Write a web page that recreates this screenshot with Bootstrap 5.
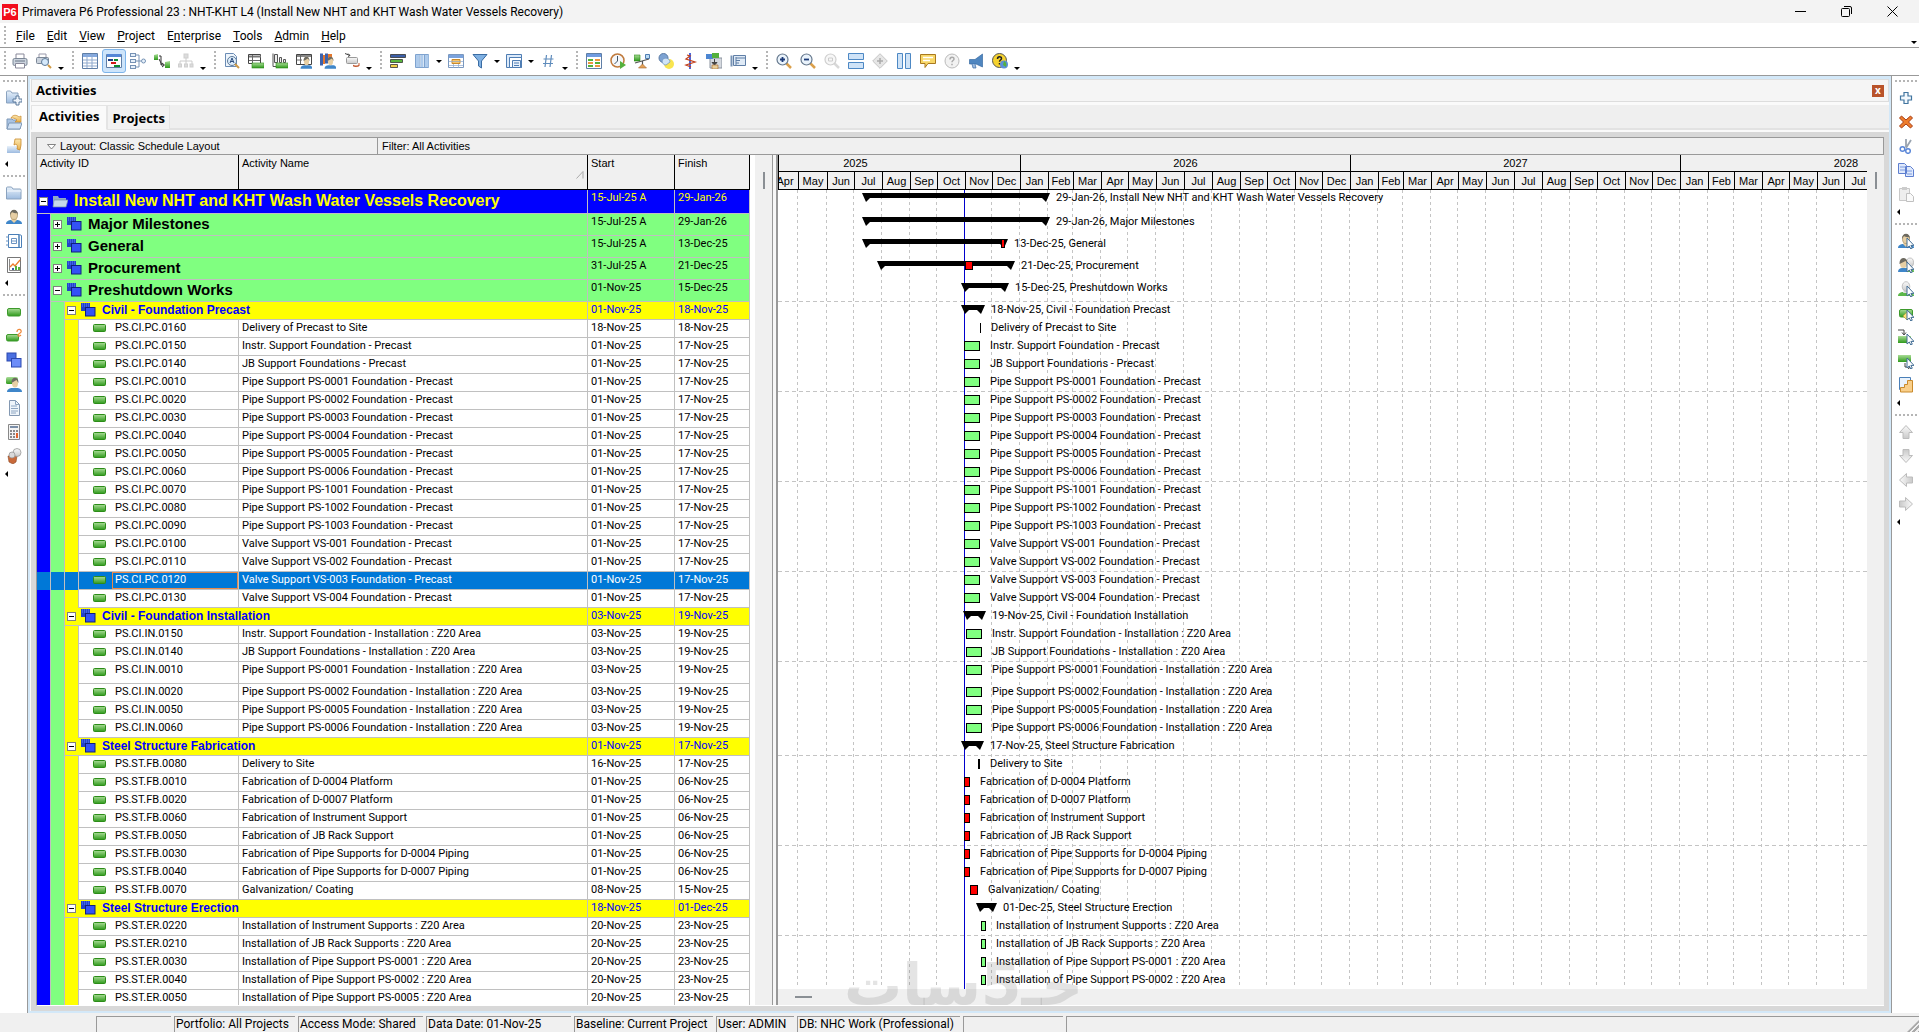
<!DOCTYPE html>
<html lang="en">
<head>
<meta charset="utf-8">
<meta name="viewport" content="width=device-width, initial-scale=1">
<title>Primavera P6 Professional 23</title>
<link href="https://cdn.jsdelivr.net/npm/bootstrap@5.3.0/dist/css/bootstrap.min.css" rel="stylesheet">
<style>
:root{--line:#999;--face:#f0f0f0;--grid:#c0c0c0}
body{font:12px/16px Roboto,"Liberation Sans",sans-serif;color:#000;background:#fff}
button{color:inherit;font:inherit}
.titlebar{height:23px;background:#f3f3f3;padding-left:2px}
.logo-p6{width:16px;height:16px;background:#f20d1c;color:#fff;font:bold 11px/16px "Liberation Sans",sans-serif}
.win-btn{width:46px;height:23px}
.menubar{height:25px;border-bottom:1px solid var(--line)}
.menubar .nav-link{color:#000;padding:2px 6px 0;line-height:20px}
.grip{width:2px;background:repeating-linear-gradient(#b5b5b5 0 2px,transparent 2px 4px)}
.toolbar{height:28px;border-bottom:1px solid var(--line)}
.toolbar .grip{height:20px;margin:0 4px 0 6px}
.toolbar .grip:first-child{margin:0 2px 0 4px}
.tool{width:24px;height:24px;border:1px solid transparent;border-radius:3px;background:none;padding:0;display:flex;align-items:center;justify-content:center}
.tool.on{background:#cde4fa;border-color:#7db4ea}
.ico{width:16px;height:16px;display:block;flex:none}
.pill{width:14px;height:10px;display:block;flex:none}
.caret{width:10px;height:24px;border:0;background:none;padding:0;display:flex;align-items:center;justify-content:center}
.caret::before{content:"";border:3px solid transparent;border-top:3px solid #000;border-bottom:0}
.caret.low::before{margin-top:14px}
.sidebar{width:28px;flex:none;border-right:1px solid var(--line)}
.sidebar.right{border-right:0;border-left:1px solid var(--line)}
.dots{width:22px;height:2px;margin:4px 0;background:repeating-linear-gradient(90deg,#b5b5b5 0 2px,transparent 2px 4px)}
.sidebar .more{width:24px;height:13px;border:0;background:none;padding:0 0 0 3px;display:flex;align-items:center}
.more::before{content:"";border:3px solid transparent;border-right:3px solid #000;border-left:0}
.frame{border:2px solid #d3e8f8;border-top-width:3px;background:#fafafa;padding-left:1px}
.doc-head{height:23px;border:1px solid #ddd;background:#f5f5f5;font:bold 13px/21px "Open Sans",sans-serif;padding:1px 4px 0}
.closebox{width:12px;height:12px;background:#b9532a;color:#fff;border:0;padding:0;font:bold 10px/11px "Open Sans",sans-serif}
.doc-tabs{height:25px;background:#efefef;border-bottom:2px solid #e2e2e2;margin:3px 0 2px}
.doc-tabs .nav-link{font:bold 13px/22px "Open Sans",sans-serif;color:#000;padding:1px 4px 0;border:1px solid #e4e4e4;border-radius:0;background:#f2f2f2}
.doc-tabs .nav-link.active{background:#fafafa;border-bottom-color:#fafafa;padding:0 7px 1px;line-height:21px}
.workspace{background:#d8d8d8;padding:5px}
.layoutbar{height:18px;border:1px solid var(--line);background:var(--face);font:11px/16px "Liberation Sans",sans-serif}
.layoutbar .lay{width:341px;border-right:1px solid var(--line)}
.layoutbar button{border:0;background:none;padding:0 0 0 10px}
.panes{border-left:1px solid var(--line);background:var(--face);border-bottom:1px solid #fff}
.pane-left{width:718px;background:#fff}
.strip{width:17px;background:var(--face)}
.thumb-v{width:2px;height:17px;background:#8a8f94;margin:17px 0 0 8px}
.splitter{width:6px;border-left:1px solid var(--line);border-right:2px solid var(--line);background:#f7f7f7}
.gantt-table{table-layout:fixed;width:713px;border-collapse:separate;border-spacing:0;font:11px/16px Roboto,"Liberation Sans",sans-serif}
.gantt-table th{font:11px/16px "Liberation Sans",sans-serif;height:35px;background:var(--face);border-right:1px solid #000;border-bottom:1px solid #000;vertical-align:top;padding:0 3px}
.gantt-table td{padding:0 3px;vertical-align:top;border-right:1px solid var(--grid);border-bottom:1px solid var(--grid);white-space:nowrap}
.gantt-table td.tree{padding:0;border-bottom:0}
.h24{height:24px}.h22{height:22px}.h18{height:18px}
.band{width:14px;flex:none;border-right:1px solid var(--grid)}
.band-blue{background:#00f}.band-green{background:#80ff80}.band-yellow{background:#ff0}
.node{border-bottom:1px solid var(--grid);display:flex;align-items:center;flex:1 1 0}
.lv0 td,.lv0 .node{background:#00f;color:#ff0}
.lv1 td,.lv1 .node{background:#80ff80}
.lv2 td,.lv2 .node{background:#ff0;color:#00f}
.lv0 .nm{font:bold 16px/20px "Liberation Sans",sans-serif;padding-left:6px}
.lv1 .nm{font:bold 15px/20px "Liberation Sans",sans-serif;padding-left:6px}
.lv2 .nm{font:bold 12px/16px "Liberation Sans",sans-serif;padding-left:6px}
.pm{width:9px;height:9px;border:1px solid #808080;background:#fff;padding:0;margin:0 4px 0 2px;flex:none;position:relative}
.pm::before{content:"";position:absolute;left:1px;right:1px;top:3px;height:1px;background:#000}
.pm.plus::after{content:"";position:absolute;top:1px;bottom:1px;left:3px;width:1px;background:#000}
.act .node{padding-left:14px}
.act .aid{padding-left:3px;margin-left:5px;flex:1;height:100%}
.sel td,.sel .node,.sel .band{background:#0078d7;color:#fff}
.sel .aid{outline:1px solid #e8894a;outline-offset:-1px}
.chart{background:#fff}
.scale{height:35px;background:var(--face);font:11px/16px "Liberation Sans",sans-serif;border-left:1px solid #000}
.scale .yr,.scale .mo{flex:none;text-align:center;border-right:1px solid #000;border-bottom:1px solid #000}
.scale .yr{height:17px}.scale .mo{height:18px;line-height:18px}
.months-grid{position:absolute;inset:0 0 4px 0;overflow:hidden}
.months-grid div{flex:none;background:repeating-linear-gradient(#c4c4c4 0 3px,transparent 3px 6px) right/1px 100% no-repeat}
.dataline{position:absolute;top:0;bottom:0;width:1px;background:#00c}
.crow{display:flex;align-items:flex-start;font:11px/15px Roboto,"Liberation Sans",sans-serif;white-space:nowrap;position:relative}
.crow.rule{background:repeating-linear-gradient(90deg,#c4c4c4 0 4px,transparent 4px 7px) bottom/100% 1px no-repeat}
.bar{flex:none;height:10px;margin-top:3px;border:1px solid #000;background:#80ff80}
.bar.crit{background:#f00}
.bar.tick{background:#000;border:0}
.summ{flex:none;height:9px;margin-top:3px;background:#000;clip-path:polygon(0 0,100% 0,calc(100% - 4px) 100%,calc(100% - 8px) 5px,8px 5px,4px 100%)}
.over{position:absolute;top:3px;height:9px;border:1px solid #000;background:#f00}
.lbl{padding-left:10px}.summ ~ .lbl{padding-left:6px}
.bottom-strip{height:16px;background:var(--face)}
.thumb-h{width:17px;height:2px;background:#8a8f94;margin:7px 0 0 17px}
.mark-logo{position:absolute;left:66px;bottom:-4px;color:rgba(120,120,120,.2);font:bold 58px/48px "DejaVu Sans",sans-serif;pointer-events:none;white-space:nowrap}
.status{height:19px;border-top:3px solid var(--face);background:var(--face)}
.status .cellbox{border-top:1px solid var(--line);border-left:1px solid var(--line);padding-left:1px;line-height:15px;margin-right:3px;white-space:nowrap;overflow:hidden;flex:none}
.resizer{width:12px;height:12px;background:repeating-linear-gradient(135deg,#aaa 0 2px,var(--face) 2px 4px);clip-path:polygon(100% 0,100% 100%,0 100%)}
</style>
</head>
<body class="vh-100 d-flex flex-column overflow-hidden">
<svg width="0" height="0" class="position-absolute" aria-hidden="true">
<defs>
<linearGradient id="gb" x1="0" y1="0" x2="0" y2="1"><stop offset="0" stop-color="#e8f1fa"/><stop offset="1" stop-color="#9dbbe0"/></linearGradient>
<linearGradient id="gg" x1="0" y1="0" x2="0" y2="1"><stop offset="0" stop-color="#a9dc97"/><stop offset="1" stop-color="#2f9a1c"/></linearGradient>
<linearGradient id="gy" x1="0" y1="0" x2="0" y2="1"><stop offset="0" stop-color="#fbe7b0"/><stop offset="1" stop-color="#e9b04a"/></linearGradient>
<linearGradient id="gs" x1="0" y1="0" x2="0" y2="1"><stop offset="0" stop-color="#fafafa"/><stop offset="1" stop-color="#c9c9c9"/></linearGradient>
</defs>
<symbol id="i-person" viewBox="0 0 16 16"><path d="M0 15c0-3 3-4 5-4h6c2 0 5 1 5 4z" fill="#3f86c9"/><path d="M6 9h4l1 2-3 3-3-3z" fill="#e7cfa4"/><ellipse cx="8" cy="6" rx="3.500" ry="4.500" fill="#e7cfa4" stroke="#9a8458" stroke-width=".6"/><path d="M4 6c-.5-7 8.500-7 8 0l-1-2c-2 .5-4 0-5-1z" fill="#6d6a60"/></symbol>
<symbol id="i-pair" viewBox="0 0 16 16"><path d="M5 15c0-3 2-4 4-4h3c2 0 4 1 4 4z" fill="#5cb84a"/><ellipse cx="12" cy="5.500" rx="3.500" ry="4.500" fill="url(#gs)" stroke="#aaa" stroke-width=".7"/><path d="M0 15c0-3 2-4 4-4h3c2 0 3 1 3 4z" fill="#3f86c9"/><ellipse cx="5.500" cy="6.500" rx="3.500" ry="4.500" fill="#e7cfa4"/><path d="M1.500 7c-.5-8 8.500-8 8 0l-2-3z" fill="#6d6a60"/></symbol>
<symbol id="i-ghost" viewBox="0 0 16 16"><path d="M0 15c0-3 3-4 5-4h6c2 0 5 1 5 4z" fill="#5cb84a"/><path d="M6 9h4l1 3H5z" fill="#ddd"/><ellipse cx="8" cy="5.500" rx="3.800" ry="4.800" fill="url(#gs)" stroke="#aaa" stroke-width=".7"/></symbol>
<symbol id="i-cur" viewBox="0 0 16 16"><path d="M9 5v10l2.300-2 1.500 3 1.500-.8-1.400-2.800H16z" fill="#fff" stroke="#456f96"/></symbol>
<symbol id="i-diam" viewBox="0 0 16 16"><path d="M9 7l4 4-4 4-4-4z" fill="#f8e27a" stroke="#b99a2c" stroke-width=".7"/></symbol>
<symbol id="i-pred" viewBox="0 0 16 16"><path d="M0 1h6v4M4 3.500L6 6l2-2.500" fill="none" stroke="#444"/><rect x="0" y="7" width="13" height="7" fill="url(#gg)"/></symbol>
<symbol id="i-succ" viewBox="0 0 16 16"><rect x="0" y="2" width="13" height="7" fill="url(#gg)"/><path d="M7 10v4h5M10 12l2.500 2-2.500 2" fill="none" stroke="#444"/></symbol>
<symbol id="i-act" viewBox="0 0 16 16"><rect x="1.500" y="4.500" width="13" height="7.500" rx="1.500" fill="url(#gg)" stroke="#3d9a2c"/></symbol>
<symbol id="i-pill" viewBox="0 0 14 10"><rect x=".5" y="1.500" width="12" height="7" rx="1" fill="url(#gg)" stroke="#2c8c18"/></symbol>
<symbol id="i-wbs" viewBox="0 0 16 16"><rect x="1" y="1" width="9" height="8" fill="#2442c8"/><path d="M2 2h7M2 4h7" stroke="#5f86ff" stroke-dasharray="1 1"/><rect x="5.500" y="5.500" width="9.500" height="8.500" fill="#3352f5" stroke="#10207c"/></symbol>
<symbol id="i-wbs2" viewBox="0 0 16 16"><rect x="1" y="1" width="9" height="8" fill="#4a6fe0" stroke="#2b49b0"/><rect x="5.500" y="6.500" width="9.500" height="8.500" fill="#6d8df8" stroke="#2b49b0"/></symbol>
<symbol id="i-folder" viewBox="0 0 16 16"><path d="M.5 14V3c0-.6.400-1 1-1h4l1.500 2H14c.8 0 1 .4 1 1v9z" fill="url(#gb)" stroke="#8ba3bf"/><path d="M1 6h14" stroke="#f5f9fd"/></symbol>
<symbol id="i-folderopen" viewBox="0 0 16 16"><path d="M1 14V3h5l1 2h7v9z" fill="#8fa9c8"/><path d="M1 14l1-7h14l-2 7z" fill="#c6d8ea" stroke="#6b89ab" stroke-width=".7"/></symbol>
<symbol id="i-newprj" viewBox="0 0 16 16"><path d="M.5 13V2c0-.6.400-1 1-1h3l1.500 2H12v10z" fill="url(#gb)" stroke="#8ba3bf"/><path d="M10 6h3v3h3v3h-3v3h-3v-3H7V9h3z" fill="#eef4fb" stroke="#5d7a9c"/></symbol>
<symbol id="i-openprj" viewBox="0 0 16 16"><path d="M1 15V5h5l1 1h7v9z" fill="#a9c3e3" stroke="#7f99b8"/><path d="M1 15l2-6h13l-2 6z" fill="#cfe0f3" stroke="#7f99b8"/><path d="M5 4c2-4 6-3 8-1l2-1v6H9l2-2c-2-2-4-2-6-2z" fill="url(#gy)" stroke="#c98a2c" stroke-width=".7"/></symbol>
<symbol id="i-closeprj" viewBox="0 0 16 16"><path d="M1 15V8h10l3 1v6z" fill="url(#gb)"/><path d="M9 1h6v6l-1 5-3-1c1-3 0-4-1-5l-2 1z" fill="url(#gy)" stroke="#c98a2c" stroke-width=".8"/></symbol>
<symbol id="i-print" viewBox="0 0 16 16"><path d="M4 1h8v5H4z" fill="#fff" stroke="#889"/><rect x="1" y="5.500" width="14" height="7" rx="1.500" fill="#cbd3dd" stroke="#7b8796"/><path d="M3.500 10.500h9v4.500h-9z" fill="#fff" stroke="#889"/><path d="M3 8h10" stroke="#6a7787"/></symbol>
<symbol id="i-preview" viewBox="0 0 16 16"><path d="M3 1h7v4H3z" fill="#fff" stroke="#99a"/><rect x=".5" y="4.500" width="12" height="6" rx="1" fill="#cbd3dd" stroke="#7b8796"/><circle cx="9" cy="9" r="3.500" fill="#d5e9fb" stroke="#5e7a98"/><path d="M12 12l3 3" stroke="#d09a45" stroke-width="2"/></symbol>
<symbol id="i-table" viewBox="0 0 16 16"><path d="M.5.500h15v15H.5z" fill="#fff" stroke="#5f7ea6"/><path d="M1 1h14v3H1z" fill="#84a9e0"/><path d="M1 7h14M1 10h14M1 13h14M5 1v14M10 1v14" stroke="#8fa9cd"/></symbol>
<symbol id="i-gantt" viewBox="0 0 16 16"><path d="M.5 1.500h15v13H.5z" fill="#fff" stroke="#5f7ea6"/><path d="M1 1h14v3H1z" fill="#5487d6"/><path d="M2 6h5v2H2z" fill="#1d3f86"/><path d="M5 9h5v2H5z" fill="#d11a1a"/><path d="M8 6h4v2H8zM8 12h6v2H8z" fill="#0d8b35"/></symbol>
<symbol id="i-net" viewBox="0 0 16 16"><g fill="#e6f0fa" stroke="#7692b5"><rect x=".5" y=".5" width="5" height="3"/><rect x=".5" y="6.500" width="5" height="3"/><rect x=".5" y="12.500" width="5" height="3"/><circle cx="13.500" cy="8" r="2"/></g><path d="M6 2h3v12H6M6 8h5" fill="none" stroke="#7692b5"/></symbol>
<symbol id="i-trace" viewBox="0 0 16 16"><path d="M0 2l4-1v6H0z" fill="url(#gg)"/><path d="M11 9l5-1v7h-5z" fill="url(#gg)"/><path d="M5 3h2v9h3M5 6l3 6M8 10l2.500 2L8 14" fill="none" stroke="#333"/></symbol>
<symbol id="i-org" viewBox="0 0 16 16"><g fill="#dcdcdc" stroke="#cfcfcf"><rect x="6" y="1" width="4" height="4"/><rect x=".5" y="11" width="3" height="3"/><rect x="6.500" y="11" width="3" height="3"/><rect x="12" y="11" width="3" height="3"/></g><path d="M8 5v6M2 11V8h12v3" fill="none" stroke="#ccc"/></symbol>
<symbol id="i-find" viewBox="0 0 16 16"><path d="M1.500.500h8l3 3v10h-11z" fill="#eef5fc" stroke="#6b8cb5"/><circle cx="8" cy="8" r="4.500" fill="#dcecfb" stroke="#5e7a98"/><path d="M6 10l2-5 2 5M6.700 8.500h2.600" fill="none" stroke="#2b4c7c"/><path d="M11 11l4 4" stroke="#d09a45" stroke-width="2"/></symbol>
<symbol id="i-grid2" viewBox="0 0 16 16"><path d="M.5 1.500h12v9H.5z" fill="#fff" stroke="#444"/><path d="M1 3.500h12" stroke="#777" stroke-width="2"/><path d="M4.500 2v9M1 7.500h11" stroke="#666"/><rect x="4" y="10" width="12" height="5" fill="url(#gg)" stroke="#2c8c18" stroke-width=".6"/></symbol>
<symbol id="i-prof" viewBox="0 0 16 16"><path d="M1 .5v13h14" stroke="#555" fill="none"/><path d="M2.500 1.500h3v8h-3zM7.500 4.500h2v5h-2zM11.500 6.500h2v3h-2z" fill="#eee" stroke="#555"/><rect x="4" y="10" width="12" height="5" fill="url(#gg)" stroke="#2c8c18" stroke-width=".6"/></symbol>
<symbol id="i-rgrid" viewBox="0 0 16 16"><path d="M.5 1.500h15v10H.5z" fill="#fff" stroke="#444"/><path d="M1 3h14" stroke="#888" stroke-width="2"/><path d="M4.500 1v10M1 7h5" stroke="#666"/><g transform="translate(4.500 3) scale(.75 .85)"><path d="M0 15c0-3 3-4 5-4h6c2 0 5 1 5 4z" fill="#3f86c9"/><ellipse cx="8" cy="6" rx="3.500" ry="5" fill="#e7cfa4"/><path d="M4 6c-.5-7 8.500-7 8 0l-2-3z" fill="#6d6a60"/></g></symbol>
<symbol id="i-rprof" viewBox="0 0 16 16"><path d="M0 .5h3v12H0zM5 .5h3v10H5z" fill="#3c62ad"/><path d="M3 2h2v9H3zM8 1h4v9H8z" fill="#e3762c"/><g transform="translate(4.500 3) scale(.75 .85)"><path d="M0 15c0-3 3-4 5-4h6c2 0 5 1 5 4z" fill="#3f86c9"/><ellipse cx="8" cy="6" rx="3.500" ry="5" fill="#e7cfa4"/><path d="M4 6c-.5-7 8.500-7 8 0l-2-3z" fill="#6d6a60"/></g></symbol>
<symbol id="i-rel" viewBox="0 0 16 16"><path d="M1 .5l5 2M4 .5l2 2-2 1" stroke="#444" fill="none"/><rect x="2.500" y="4.500" width="11" height="6" rx="1" fill="url(#gs)" stroke="#999"/><path d="M9 12c3 3 5 1 6 0M9 13h6v-3" stroke="#c0552a" fill="none"/></symbol>
<symbol id="i-bars" viewBox="0 0 16 16"><g stroke="#333" stroke-width=".8"><path d="M.5 1.500h15v3H.5z" fill="#3c5fa8"/><path d="M.5 6.500h12v3H.5z" fill="#59b63c"/><path d="M.5 11.500h7v3h-7z" fill="#f2cf48"/></g></symbol>
<symbol id="i-cols" viewBox="0 0 16 16"><path d="M1.500 1.500h13v13h-13z" fill="#fff" stroke="#7fa3cf"/><path d="M2 2h3.500v12H2zM7 2h2.500v12H7zM11 2h3.500v12H11z" fill="#aecbec"/><path d="M6 1v14M10.500 1v14" stroke="#7fa3cf"/></symbol>
<symbol id="i-tscale" viewBox="0 0 16 16"><path d="M.5 1.500h15v13H.5z" fill="#fff" stroke="#7a98bf"/><path d="M1 2h14v3H1z" fill="#7ba3dd"/><path d="M4 6.500h8v4H4z" fill="#f8c56a" stroke="#c98a2c"/><path d="M1 12.500h14M5.500 11v4M10.500 11v4M1 8.500h14" stroke="#8fa9cd" stroke-width=".7"/></symbol>
<symbol id="i-filter" viewBox="0 0 16 16"><path d="M1 1.500h14L9.500 8v7l-3-2V8z" fill="#7fb0e2" stroke="#3a6ca3"/></symbol>
<symbol id="i-group" viewBox="0 0 16 16"><path d="M.5 1.500h15v13H.5z" fill="#dceafa" stroke="#4f7db3"/><path d="M3.500 4.500h12v10h-12z" fill="#fff" stroke="#4f7db3"/><path d="M6.500 7.500h8v7h-8z" fill="#e9f2fc" stroke="#4f7db3"/><path d="M8 10h5M8 12.500h5" stroke="#4f7db3"/></symbol>
<symbol id="i-hash" viewBox="0 0 16 16"><path d="M6.500 2L5 14M11.500 2L10 14M3.500 6h10M3 10.500h10" stroke="#5f8cbc" stroke-width="1.200"/></symbol>
<symbol id="i-sheet" viewBox="0 0 16 16"><path d="M.5.500h15v15H.5z" fill="#fff" stroke="#5f7ea6"/><path d="M1 1h14v3H1z" fill="#6f9be0"/><path d="M2 6h5v2H2zM2 12h5v2H2zM9 9h5v2H9z" fill="#54b13d"/><path d="M2 9h5v2H2zM9 6h5v2H9zM9 12h5v2H9z" fill="#ee9440"/></symbol>
<symbol id="i-clock" viewBox="0 0 16 16"><circle cx="7.500" cy="7.500" r="6.500" fill="#f4f7fb" stroke="#c07a3c" stroke-width="1.500"/><path d="M7.500 3v5l-3 3" fill="none" stroke="#456"/><path d="M10 8l6 4-6 4z" fill="#54b13d"/></symbol>
<symbol id="i-level" viewBox="0 0 16 16"><path d="M0 2h6v6H0z" fill="url(#gg)" stroke="#2c8c18" stroke-width=".6"/><path d="M11.500 1.500h4v4h-4z" fill="#bcdcf5" stroke="#4f7db3"/><path d="M1 10l14-4M8.500 8v5" stroke="#555" stroke-width="1.200"/><path d="M4.500 15l4-4 4 4z" fill="#e3a25a" stroke="#a4662a" stroke-width=".6"/></symbol>
<symbol id="i-prog" viewBox="0 0 16 16"><circle cx="5.500" cy="5" r="4.500" fill="#7da3d3" stroke="#5b7ba5"/><circle cx="11" cy="11" r="5" fill="#f9e54f"/><path d="M5 6c3-2 7 0 7 3l-4 3c-3 0-5-3-3-6z" fill="#cfe3f7" stroke="#6d91bd" stroke-width=".7"/></symbol>
<symbol id="i-line" viewBox="0 0 16 16"><path d="M8 0v16" stroke="#1f3fd0" stroke-width="1.600"/><path d="M5 2l3 1-4 3 9 3-9 3 5 2" fill="none" stroke="#c2401c" stroke-width="1.300"/></symbol>
<symbol id="i-store" viewBox="0 0 16 16"><path d="M4 5h12v10H4z" fill="#d5d9df" stroke="#8a929e"/><path d="M0 1h7v5H0z" fill="#4c86d2"/><path d="M6 0h7v5H6z" fill="#54b13d"/><path d="M8.500 6v4M6 9.500L8.500 12 11 9.500z" stroke="#444" fill="#444"/><path d="M6 12h6v4H6z" fill="#e9cf9b" stroke="#a4662a" stroke-width=".6"/></symbol>
<symbol id="i-spot" viewBox="0 0 16 16"><path d="M.5 2.500h2v11h-2z" fill="#7793b5"/><path d="M3.500 2.500h12v10h-12z" fill="#dfeaf6" stroke="#5f7ea6"/><path d="M6 5h9M6 7.500h4M6 10h3M6 4v8" stroke="#5f7ea6"/></symbol>
<symbol id="i-zin" viewBox="0 0 16 16"><path d="M10 10l5 5" stroke="#dba04b" stroke-width="2.500"/><circle cx="6.500" cy="6.500" r="5.500" fill="#eaf3fb" stroke="#65788d" stroke-width="1.200"/><path d="M6.500 4v5M4 6.500h5" stroke="#1c3a78" stroke-width="1.800"/></symbol>
<symbol id="i-zout" viewBox="0 0 16 16"><path d="M10 10l5 5" stroke="#dba04b" stroke-width="2.500"/><circle cx="6.500" cy="6.500" r="5.500" fill="#eaf3fb" stroke="#65788d" stroke-width="1.200"/><path d="M4 6.500h5" stroke="#1c3a78" stroke-width="1.800"/></symbol>
<symbol id="i-zfit" viewBox="0 0 16 16"><path d="M10 10l5 5" stroke="#d8d8d8" stroke-width="2.500"/><circle cx="6.500" cy="6.500" r="5.500" fill="#f7f7f7" stroke="#cfcfcf" stroke-width="1.200"/><path d="M4.500 5h4v3h-4z" fill="none" stroke="#ccc"/></symbol>
<symbol id="i-hsplit" viewBox="0 0 16 16"><path d="M.5.500h15v6H.5zM.5 9.500h15v6H.5z" fill="#cfe3f7" stroke="#4d88c4"/></symbol>
<symbol id="i-diamond" viewBox="0 0 16 16"><path d="M8 .7L15.300 8 8 15.300.7 8z" fill="#e6e6e6" stroke="#c4c4c4"/><path d="M8 5v6M5 8h6" stroke="#aaa" stroke-width="1.500"/></symbol>
<symbol id="i-vsplit" viewBox="0 0 16 16"><path d="M1.500.500h5v15h-5zM9.500.500h5v15h-5z" fill="#cfe3f7" stroke="#4d88c4"/></symbol>
<symbol id="i-note" viewBox="0 0 16 16"><path d="M.5 1.500h15v9H8l-3 4v-4H.5z" fill="#f8d768" stroke="#a9791f"/><path d="M3 4.500h10M3 7.500h7" stroke="#fff" stroke-width="1.500"/></symbol>
<symbol id="i-helpg" viewBox="0 0 16 16"><circle cx="8" cy="8" r="7" fill="#f2f2f2" stroke="#bbb"/><path d="M6 6.500c0-3 4-3 4-.5 0 1.500-2 1.500-2 3.200M8 10.800v1.400" fill="none" stroke="#aaa" stroke-width="1.500"/></symbol>
<symbol id="i-horn" viewBox="0 0 16 16"><path d="M14.500 1v13L8 11H1.500V6.500H7z" fill="#4f86c0" stroke="#3a6ca3" stroke-width=".7"/><path d="M4 11l1 4h3l-1-4" fill="#9dbbe0" stroke="#3a6ca3" stroke-width=".7"/></symbol>
<symbol id="i-helpc" viewBox="0 0 16 16"><circle cx="7.500" cy="7.500" r="7" fill="#f6d22e" stroke="#555"/><path d="M5.500 6c0-3 4-3 4-.5 0 1.500-2 1.500-2 3.200M7.500 10v1.500" fill="none" stroke="#222" stroke-width="1.500"/><circle cx="12" cy="11.500" r="4" fill="#5a8fd8"/><path d="M12 8c2 1 3 3 2 6l-3-2z" fill="#54b13d"/></symbol>
<symbol id="i-book" viewBox="0 0 16 16"><path d="M2.500 1.500h11l2 1v12h-13z" fill="#fff" stroke="#4a7fb8"/><path d="M13 2v12" stroke="#4a7fb8" stroke-width="1.500"/><path d="M5.500 5.500h5v5h-5zM6 8h4M0 4h3M0 8h3M0 12h3" fill="none" stroke="#6b93c2"/></symbol>
<symbol id="i-track" viewBox="0 0 16 16"><path d="M1.500.500h13v15h-13z" fill="#fff" stroke="#777"/><path d="M3.500 2v11.500H14" fill="none" stroke="#888"/><path d="M4 10l3-3 2 2 5-6" fill="none" stroke="#ec7d2b" stroke-width="1.300"/><path d="M6 11h2v2H6z" fill="#3c5fa8"/><path d="M9 9h2v4H9zM12 10h2v3h-2z" fill="#54b13d"/></symbol>
<symbol id="i-steps" viewBox="0 0 16 16"><rect x=".5" y="6.500" width="12" height="6.500" rx="1.500" fill="url(#gg)" stroke="#3d9a2c"/><path d="M11 4c0-4 5-3 4 0-.6 1.500-2 1-3 3 0 2 2 1 3 0" fill="none" stroke="#ee8a3c" stroke-width="1.300"/></symbol>
<symbol id="i-assign" viewBox="0 0 16 16"><rect x="0" y="1" width="12" height="7" rx="1.500" fill="url(#gg)"/><path d="M1 16c0-3 3-4 5-4h5c2 0 5 1 5 4z" fill="#3f86c9"/><ellipse cx="9" cy="7" rx="3" ry="4.500" fill="#e7cfa4"/><path d="M5.500 7c-.5-7 7.500-7 7 0l-2-3z" fill="#6d6a60"/></symbol>
<symbol id="i-doc" viewBox="0 0 16 16"><path d="M3.500.500h6l4 4v11h-10z" fill="#eff5fb" stroke="#8398b2"/><path d="M9.500.500v4h4M5 6h6M5 8.500h7M5 11h7M5 13h5" fill="none" stroke="#8ea6c2"/></symbol>
<symbol id="i-calc" viewBox="0 0 16 16"><path d="M2.500.500h11v15h-11z" fill="#f4f4f4" stroke="#888"/><path d="M4 3h8" stroke="#7a8ea8" stroke-width="2"/><path d="M4 7h8M4 10h5M4 13h5" stroke="#666" stroke-width="1.500" stroke-dasharray="2 1"/><path d="M10 9h2v5h-2z" fill="#e2622c"/></symbol>
<symbol id="i-risk" viewBox="0 0 16 16"><path d="M2 8h9l-1 6-3 2-4-2z" fill="#c96a3a" stroke="#8a4420" stroke-width=".6"/><circle cx="11" cy="4.500" r="4" fill="url(#gs)" stroke="#999" stroke-width=".8"/><circle cx="6" cy="7" r="3" fill="#d9d9d9" stroke="#999" stroke-width=".8"/></symbol>
<symbol id="i-plus" viewBox="0 0 16 16"><path d="M6 2.500h4V6h3.500v4H10v3.500H6V10H2.500V6H6z" fill="#f2f8fd" stroke="#41759f" stroke-width="1.200"/></symbol>
<symbol id="i-del" viewBox="0 0 16 16"><path d="M3.500 2L8 6l4.500-4 2 2-4 4 4 4-2 2L8 10l-4.500 4-2-2 4-4-4-4z" fill="#ee7d2c" stroke="#a63c14"/></symbol>
<symbol id="i-cut" viewBox="0 0 16 16"><path d="M8 1v8M13 2L8 10" stroke="#9aa4b0" stroke-width="1.800"/><circle cx="4.500" cy="11" r="2.300" fill="none" stroke="#5b87d8" stroke-width="1.500"/><circle cx="10" cy="13" r="2.300" fill="none" stroke="#5b87d8" stroke-width="1.500"/></symbol>
<symbol id="i-copy" viewBox="0 0 16 16"><path d="M.5 1.500h6l2 2v8h-8zM7.500 4.500h5l3 3v7h-8z" fill="#dfe9fb" stroke="#5e7fd0"/><path d="M2 5h5M2 8h5M9 9h5M9 12h5" stroke="#7c9be0"/></symbol>
<symbol id="i-paste" viewBox="0 0 16 16"><path d="M1.500 2.500h10v12h-10z" fill="#eee" stroke="#c8c8c8"/><path d="M4 1h5v3H4z" fill="#ccc"/><path d="M8.500 7.500h4l3 3v5h-7z" fill="#fafafa" stroke="#c0c0c0"/></symbol>
<symbol id="i-wizard" viewBox="0 0 16 16"><path d="M1.500.500h11v12h-11z" fill="#eaf3fc" stroke="#4a7fb8"/><path d="M2.500 15v-4.500h4v-3h3v-4h5V15z" fill="#f9cf8a" stroke="#c98a2c"/></symbol>
<symbol id="i-up" viewBox="0 0 16 16"><path d="M8 1.500l6.500 7H11v6H5v-6H1.500z" fill="url(#gs)" stroke="#bcbcbc"/></symbol>
</svg>

<header class="titlebar d-flex align-items-center">
  <span class="logo-p6 text-center me-1">P6</span>
  <span class="flex-fill text-truncate">Primavera P6 Professional 23 : NHT-KHT L4 (Install New NHT and KHT Wash Water Vessels Recovery)</span>
  <button class="win-btn btn p-0 border-0" aria-label="Minimize"><svg width="11" height="11" class="d-block mx-auto"><path d="M0 5.500h11" stroke="#000"/></svg></button>
  <button class="win-btn btn p-0 border-0" aria-label="Restore"><svg width="11" height="11" fill="none" stroke="#000" class="d-block mx-auto"><rect x=".5" y="2.500" width="8" height="8" rx="1"/><path d="M3 .5h6a1.500 1.500 0 0 1 1.500 1.500v6"/></svg></button>
  <button class="win-btn btn p-0 border-0 me-1" aria-label="Close"><svg width="11" height="11" class="d-block mx-auto"><path d="M.5.500l10 10M10.500.500l-10 10" stroke="#000"/></svg></button>
</header>

<nav class="menubar d-flex align-items-center" aria-label="Main menu">
  <span class="grip h-75 ms-1 me-1"></span>
  <ul class="nav flex-fill" id="menu"></ul>
  <button class="caret low" aria-label="Menu options"></button>
</nav>

<div class="toolbar d-flex align-items-center" id="toolbar" role="toolbar"></div>

<main class="d-flex flex-fill overflow-hidden">
  <aside class="sidebar d-flex flex-column align-items-center" id="left"></aside>

  <section class="frame flex-fill d-flex flex-column overflow-hidden">
    <div class="doc-head d-flex align-items-center justify-content-between"><span>Activities</span><button class="closebox" aria-label="Close view">x</button></div>
    <nav class="doc-tabs nav" aria-label="Views"><a class="nav-link active" href="#">Activities</a><a class="nav-link" href="#">Projects</a></nav>
    <div class="workspace flex-fill d-flex flex-column overflow-hidden">
      <div class="layoutbar d-flex">
        <div class="lay"><button><svg width="9" height="6" class="me-1"><path d="M.5.500h8L4.500 5z" fill="#fff" stroke="#666" stroke-width=".8"/></svg>Layout: Classic Schedule Layout</button></div>
        <div class="ps-1">Filter: All Activities</div>
      </div>
      <div class="panes d-flex flex-fill overflow-hidden">
        <div class="pane-left overflow-hidden flex-shrink-0">
          <table class="gantt-table">
            <colgroup><col style="width:202px"><col style="width:349px"><col style="width:87px"><col style="width:75px"></colgroup>
            <thead><tr><th scope="col">Activity ID</th><th scope="col"><div class="d-flex justify-content-between">Activity Name<svg width="8" height="8" class="mt-3"><path d="M.5 7.500L7 .5v7" fill="none" stroke="#aaa"/></svg></div></th><th scope="col">Start</th><th scope="col">Finish</th></tr></thead>
            <tbody id="rows"></tbody>
          </table>
        </div>
        <div class="strip flex-shrink-0"><div class="thumb-v"></div></div>
        <div class="splitter flex-shrink-0"></div>
        <div class="flex-fill d-flex flex-column position-relative overflow-hidden">
          <div class="d-flex flex-fill overflow-hidden">
            <div class="chart flex-fill d-flex flex-column overflow-hidden" id="chart">
              <div class="scale overflow-hidden flex-shrink-0"><div class="d-flex" id="years"></div><div class="d-flex" id="months"></div></div>
              <div class="position-relative overflow-hidden flex-fill">
                <div class="months-grid d-flex" id="mgrid"></div>
                <div class="dataline" id="dataline"></div>
                <div id="bars"></div>
              </div>
            </div>
            <div class="strip flex-shrink-0"><div class="thumb-v"></div></div>
          </div>
          <div class="bottom-strip flex-shrink-0 overflow-hidden"><div class="thumb-h"></div></div>
          <div class="mark-logo" dir="rtl" lang="ar">خـ5سات</div>
        </div>
      </div>
    </div>
  </section>

  <aside class="sidebar right d-flex flex-column align-items-center" id="right"></aside>
</main>

<footer class="status d-flex" id="status"></footer>

<script src="https://cdn.jsdelivr.net/npm/bootstrap@5.3.0/dist/js/bootstrap.bundle.min.js"></script>
<script>
const $ = id => document.getElementById(id);
const icon = (n, c = 'ico') => `<svg class="${c}" aria-hidden="true">${n.split('+').map(x => {
  const [id, rot] = x.split('@');
  return `<use href="#i-${id}"${rot ? ` transform="rotate(${rot} 8 8)"` : ''}/>`;
}).join('')}</svg>`;

// Menus
$('menu').innerHTML = [['', 'F', 'ile'], ['', 'E', 'dit'], ['', 'V', 'iew'], ['', 'P', 'roject'], ['E', 'n', 'terprise'], ['', 'T', 'ools'], ['', 'A', 'dmin'], ['', 'H', 'elp']]
  .map(([a, u, b]) => `<li class="nav-item"><a class="nav-link text-decoration-none" href="#">${a}<u>${u}</u>${b}</a></li>`).join('');

// Toolbars: "|" starts a band, "v" is a drop arrow, "_" is the overflow arrow
const build = (list, low) => list.split(' ').map(t =>
  t === '|' ? `<span class="${low ? 'grip' : 'dots'}"></span>` :
  t === 'v' ? '<button class="caret" aria-label="Options"></button>' :
  t === '_' ? `<button class="${low ? 'caret low' : 'more'}" aria-label="More buttons"></button>` :
  `<button class="tool${t[0] === '*' ? ' on' : ''}" aria-label="${t.replace('*', '')}">${icon(t.replace('*', ''))}</button>`).join('');
$('toolbar').innerHTML = build('| print preview _ | table *gantt net trace org _ | find grid2 prof rgrid rprof rel _ | bars cols v tscale filter v group v hash _ | sheet clock level prog line store spot _ | zin zout zfit hsplit diamond vsplit note helpg horn helpc _', true);
$('left').innerHTML = build('| newprj openprj closeprj _ | folder person book track _ | act steps wbs2 assign doc calc risk _', false);
$('right').innerHTML = build('| plus del cut copy paste _ | person+cur pair+cur ghost+cur act+diam+cur pred+cur succ+cur wizard _ | up up@180 up@270 up@90 _', false);

// Time scale
const PX = 0.904, DAY = 864e5, ORIGIN = Date.UTC(2025, 0, 1), SHIFT = -88;
const xOf = t => Math.round((t - ORIGIN) / DAY * PX) + SHIFT;
const MN = 'Jan Feb Mar Apr May Jun Jul Aug Sep Oct Nov Dec'.split(' ');
const drawScale = () => {
  const view = $('chart').clientWidth;
  let ys = '', ms = '', gs = '';
  for (let y = 2025; y < 2029; y++) {
    const w = xOf(Date.UTC(y + 1, 0, 1)) - xOf(Date.UTC(y, 0, 1));
    ys += `<div class="yr" style="width:${w}px${y === 2025 ? `;margin-left:${SHIFT}px` : ''}">${y}</div>`;
    for (let m = 0; m < 12; m++) {
      const a = xOf(Date.UTC(y, m, 1)), b = xOf(Date.UTC(y, m + 1, 1));
      const st = `style="width:${b - a}px${y === 2025 && !m ? `;margin-left:${SHIFT}px` : ''}"`;
      ms += `<div class="mo" ${st}>${b > 0 && a < view ? MN[m] : ''}</div>`;
      gs += `<div ${st}></div>`;
    }
  }
  $('years').innerHTML = ys; $('months').innerHTML = ms; $('mgrid').innerHTML = gs;
};
drawScale();
addEventListener('resize', drawScale);
$('dataline').style.left = (xOf(Date.UTC(2025, 10, 1)) - 1) + 'px';

// Schedule rows: level, id, name, start, finish, actual flag, critical, overlay bar
const P = 'Foundation - Precast', I = 'Foundation - Installation : Z20 Area';
const pc = [['0160', 'Delivery of Precast to Site', '18'], ['0150', 'Instr. Support ' + P], ['0140', 'JB Support Foundations - Precast'],
  ...['0001', '0002', '0003', '0004', '0005', '0006', '1001', '1002', '1003'].map((n, i) => ['00' + (i + 1) + '0', `Pipe Support PS-${n} ${P}`]),
  ...['001', '002', '003', '004'].map((n, i) => ['01' + i + '0', `Valve Support VS-${n} ${P}`])];
const R = [
  [0, '', 'Install New NHT and KHT Wash Water Vessels Recovery', '15-Jul-25', '29-Jan-26', 'A'],
  [1, '+', 'Major Milestones', '15-Jul-25', '29-Jan-26', 'A'],
  [1, '+', 'General', '15-Jul-25', '13-Dec-25', 'A', 0, ['11-Dec-25', '13-Dec-25']],
  [1, '+', 'Procurement', '31-Jul-25', '21-Dec-25', 'A', 0, ['01-Nov-25', '08-Nov-25']],
  [1, '-', 'Preshutdown Works', '01-Nov-25', '15-Dec-25'],
  [2, '-', 'Civil - Foundation Precast', '01-Nov-25', '18-Nov-25'],
  ...pc.map(([n, t, d]) => [3, 'PS.CI.PC.' + n, t, d ? '18-Nov-25' : '01-Nov-25', d ? '18-Nov-25' : '17-Nov-25']),
  [2, '-', 'Civil - Foundation Installation', '03-Nov-25', '19-Nov-25'],
  ...[['0150', 'Instr. Support ' + I], ['0140', 'JB Support Foundations - Installation : Z20 Area'], ['0010', 'Pipe Support PS-0001 ' + I], ['0020', 'Pipe Support PS-0002 ' + I], ['0050', 'Pipe Support PS-0005 ' + I], ['0060', 'Pipe Support PS-0006 ' + I]]
    .map(([n, t]) => [3, 'PS.CI.IN.' + n, t, '03-Nov-25', '19-Nov-25']),
  [2, '-', 'Steel Structure Fabrication', '01-Nov-25', '17-Nov-25'],
  [3, 'PS.ST.FB.0080', 'Delivery to Site', '16-Nov-25', '17-Nov-25'],
  ...[['0010', 'D-0004 Platform'], ['0020', 'D-0007 Platform'], ['0060', 'Instrument Support'], ['0050', 'JB Rack Support'], ['0030', 'Pipe Supports for D-0004 Piping'], ['0040', 'Pipe Supports for D-0007 Piping']]
    .map(([n, t]) => [3, 'PS.ST.FB.' + n, 'Fabrication of ' + t, '01-Nov-25', '06-Nov-25', '', 1]),
  [3, 'PS.ST.FB.0070', 'Galvanization/ Coating', '08-Nov-25', '15-Nov-25', '', 1],
  [2, '-', 'Steel Structure Erection', '18-Nov-25', '01-Dec-25'],
  ...[['0220', 'Instrument Supports'], ['0210', 'JB Rack Supports'], ['0030', 'Pipe Support PS-0001'], ['0040', 'Pipe Support PS-0002'], ['0050', 'Pipe Support PS-0005']]
    .map(([n, t]) => [3, 'PS.ST.ER.' + n, `Installation of ${t} : Z20 Area`, '20-Nov-25', '23-Nov-25'])
];
const date = s => { const [d, m, y] = s.split('-'); return Date.UTC(2000 + +y, MN.indexOf(m), +d); };
let tb = '', ch = '';
R.forEach(([lv, id, name, s, f, a, crit, over], i) => {
  const h = lv === 0 ? 'h24' : lv === 1 || id === 'PS.CI.IN.0010' ? 'h22' : 'h18';
  const bands = ['blue', 'green', 'yellow'].slice(0, lv).map(b => `<span class="band band-${b}"></span>`).join('');
  const dates = `<td>${s}${a ? ' ' + a : ''}</td><td>${f}</td>`;
  if (lv === 3) {
    tb += `<tr class="act${id === 'PS.CI.PC.0120' ? ' sel' : ''}"><td class="tree"><div class="d-flex ${h}">${bands}<div class="node">${icon('pill', 'pill')}<span class="aid">${id}</span></div></div></td><td>${name}</td>${dates}</tr>`;
  } else {
    tb += `<tr class="lv${lv}"><td class="tree" colspan="2"><div class="d-flex ${h}">${bands}<div class="node"><button class="pm ${id === '+' ? 'plus' : ''}" aria-label="Toggle ${name}"></button>${icon(lv ? 'wbs' : 'folderopen')}<span class="nm">${name}</span></div></div></td>${dates}</tr>`;
  }
  if (i === R.length - 1) return;
  const x1 = xOf(date(s)), x2 = xOf(date(f) + DAY), w = x2 - x1;
  const bar = lv < 3 ? `<span class="summ" style="margin-left:${x1 - 4}px;width:${w + 8}px"></span>`
    : `<span class="bar${crit ? ' crit' : ''}${w < 3 ? ' tick' : ''}" style="margin-left:${x1 - (w > 2)}px;width:${w + (w > 2)}px"></span>`;
  const ov = over ? `<span class="over" style="left:${xOf(date(over[0]))}px;width:${xOf(date(over[1]) + DAY) - xOf(date(over[0])) + 1}px"></span>` : '';
  ch += `<div class="crow ${h}${i >= 4 && (i - 4) % 5 === 0 ? ' rule' : ''}">${bar}${ov}<span class="lbl">${lv < 3 ? f + ', ' : ''}${name}</span></div>`;
});
$('rows').innerHTML = tb; $('bars').innerHTML = ch;

// Status bar
$('status').innerHTML = '<div style="width:96px"></div>' + [['', 75], ['Portfolio: All Projects', 121], ['Access Mode: Shared', 125], ['Data Date: 01-Nov-25', 145], ['Baseline: Current Project', 139], ['User: ADMIN', 78], ['DB: NHC Work (Professional)', 163], ['', 100]]
  .map(([t, w]) => `<div class="cellbox" style="width:${w}px">${t}</div>`).join('') + '<div class="cellbox flex-fill me-0 d-flex justify-content-end align-items-end"><span class="resizer"></span></div>';
</script>
</body>
</html>
